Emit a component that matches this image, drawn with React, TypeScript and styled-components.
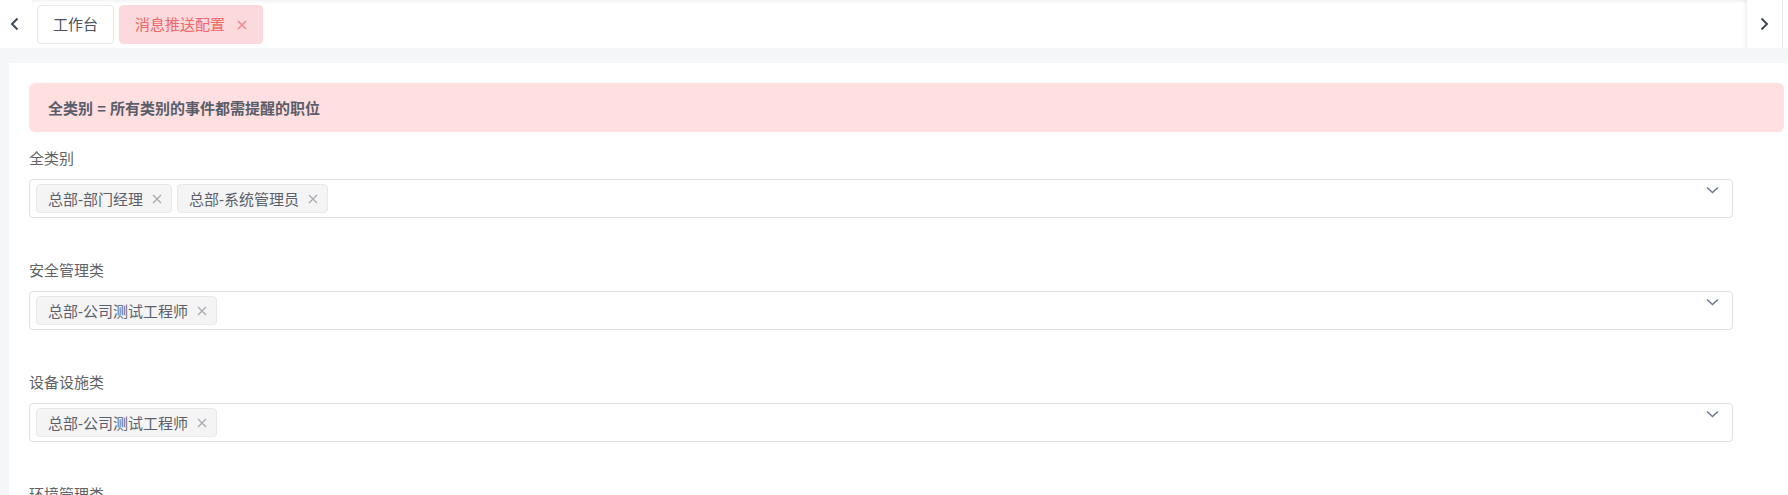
import React from "react";
import styled, { createGlobalStyle } from "styled-components";

const GlobalStyle = createGlobalStyle`
  html, body { margin: 0; padding: 0; }
  body {
    background: #f5f6f8;
    font-family: "Liberation Sans", "Noto Sans CJK SC", sans-serif;
    overflow: hidden;
  }
`;

const Page = styled.div`
  width: 1788px;
  height: 495px;
  display: flex;
  flex-direction: column;
  background: #f5f6f8;
`;

const TabBar = styled.div`
  height: 48px;
  display: flex;
  align-items: stretch;
  background: #fff;
  flex-shrink: 0;
`;

const ArrowBtn = styled.div<{ $w: number; $pl: number }>`
  width: ${(p) => p.$w}px;
  padding-left: ${(p) => p.$pl}px;
  box-sizing: border-box;
  display: flex;
  align-items: center;
  background: #fff;
  color: #3d4a5c;
  flex-shrink: 0;
`;

const TabScroll = styled.div`
  flex: 1;
  display: flex;
  align-items: flex-start;
  gap: 5px;
  padding: 5px 0 0 5px;
  box-shadow: inset 0 3px 4px -2px rgba(0, 0, 0, 0.07),
    inset -4px 0 5px -3px rgba(0, 0, 0, 0.08);
`;

const Tab = styled.div<{ $active?: boolean }>`
  height: 39px;
  box-sizing: border-box;
  display: flex;
  align-items: center;
  padding: 0 15px;
  border: 1px solid ${(p) => (p.$active ? "#fbd9dc" : "#e6e8ec")};
  border-radius: 4px;
  background: ${(p) => (p.$active ? "#fbd9dc" : "#fff")};
  color: ${(p) => (p.$active ? "#f06767" : "#4a5263")};
  font-size: 15px;
  line-height: 20px;
  white-space: nowrap;
`;

const TabClose = styled.span`
  display: inline-flex;
  margin-left: 12px;
  color: #f08c8c;
`;

const EdgeStub = styled.div`
  width: 6px;
  border-left: 1px solid #e8e9ec;
  box-sizing: border-box;
  background: #fff;
`;

const Main = styled.div`
  flex: 1;
  padding: 15px 0 0 9px;
  display: flex;
  min-height: 0;
`;

const Card = styled.div`
  flex: 1;
  background: #fff;
  padding: 20px 4px 0 20px;
  overflow: hidden;
`;

const Alert = styled.div`
  height: 49px;
  box-sizing: border-box;
  display: flex;
  align-items: center;
  padding: 0 19px;
  background: #ffdfe0;
  border-radius: 6px;
  color: #585d69;
  font-size: 15px;
  font-weight: 700;
  margin-bottom: 12px;
`;

const FormItem = styled.div`
  margin-bottom: 38px;
`;

const Label = styled.div`
  font-size: 15px;
  line-height: 30px;
  height: 30px;
  color: #606266;
  margin-bottom: 5px;
`;

const Select = styled.div`
  position: relative;
  height: 39px;
  box-sizing: border-box;
  margin-right: 51px;
  border: 1px solid #dcdfe6;
  border-radius: 4px;
  padding: 4px 6px;
  display: flex;
  align-items: flex-start;
  gap: 5px;
`;

const Tag = styled.div`
  height: 29px;
  box-sizing: border-box;
  display: flex;
  align-items: center;
  padding: 0 9px 0 11px;
  background: #f4f4f5;
  border: 1px solid #e9e9eb;
  border-radius: 4px;
  color: #5a5f6b;
  font-size: 15px;
  white-space: nowrap;
`;

const TagClose = styled.span`
  display: inline-flex;
  margin-left: 9px;
  color: #a3a6ad;
`;

const Caret = styled.span`
  position: absolute;
  right: 13px;
  top: 6px;
  display: flex;
  color: #6c7894;
`;

const XIcon = ({ size, weight = 1.1 }: { size: number; weight?: number }) => (
  <svg width={size} height={size} viewBox="0 0 10 10">
    <path d="M1 1L9 9M9 1L1 9" stroke="currentColor" strokeWidth={weight} fill="none" />
  </svg>
);

const ChevronLeft = () => (
  <svg width="9" height="14" viewBox="0 0 9 14">
    <path d="M7.5 1.5L2 7l5.5 5.5" stroke="currentColor" strokeWidth="2" fill="none" />
  </svg>
);

const ChevronRight = () => (
  <svg width="9" height="14" viewBox="0 0 9 14">
    <path d="M1.5 1.5L7 7l-5.5 5.5" stroke="currentColor" strokeWidth="2" fill="none" />
  </svg>
);

const ChevronDown = () => (
  <svg width="13" height="8" viewBox="0 0 13 8">
    <path d="M1 1.5l5.5 5 5.5-5" stroke="currentColor" strokeWidth="1.6" fill="none" />
  </svg>
);

const groups: { label: string; tags: string[] }[] = [
  { label: "全类别", tags: ["总部-部门经理", "总部-系统管理员"] },
  { label: "安全管理类", tags: ["总部-公司测试工程师"] },
  { label: "设备设施类", tags: ["总部-公司测试工程师"] },
  { label: "环境管理类", tags: ["总部-公司测试工程师"] },
];

export default function App() {
  return (
    <>
      <GlobalStyle />
      <Page>
        <TabBar>
          <ArrowBtn $w={32} $pl={10}>
            <ChevronLeft />
          </ArrowBtn>
          <TabScroll>
            <Tab>工作台</Tab>
            <Tab $active>
              消息推送配置
              <TabClose>
                <XIcon size={10} weight={1.7} />
              </TabClose>
            </Tab>
          </TabScroll>
          <ArrowBtn $w={35} $pl={13}>
            <ChevronRight />
          </ArrowBtn>
          <EdgeStub />
        </TabBar>
        <Main>
          <Card>
            <Alert>全类别 = 所有类别的事件都需提醒的职位</Alert>
            {groups.map((g) => (
              <FormItem key={g.label}>
                <Label>{g.label}</Label>
                <Select>
                  {g.tags.map((t) => (
                    <Tag key={t}>
                      {t}
                      <TagClose>
                        <XIcon size={10} />
                      </TagClose>
                    </Tag>
                  ))}
                  <Caret>
                    <ChevronDown />
                  </Caret>
                </Select>
              </FormItem>
            ))}
          </Card>
        </Main>
      </Page>
    </>
  );
}
